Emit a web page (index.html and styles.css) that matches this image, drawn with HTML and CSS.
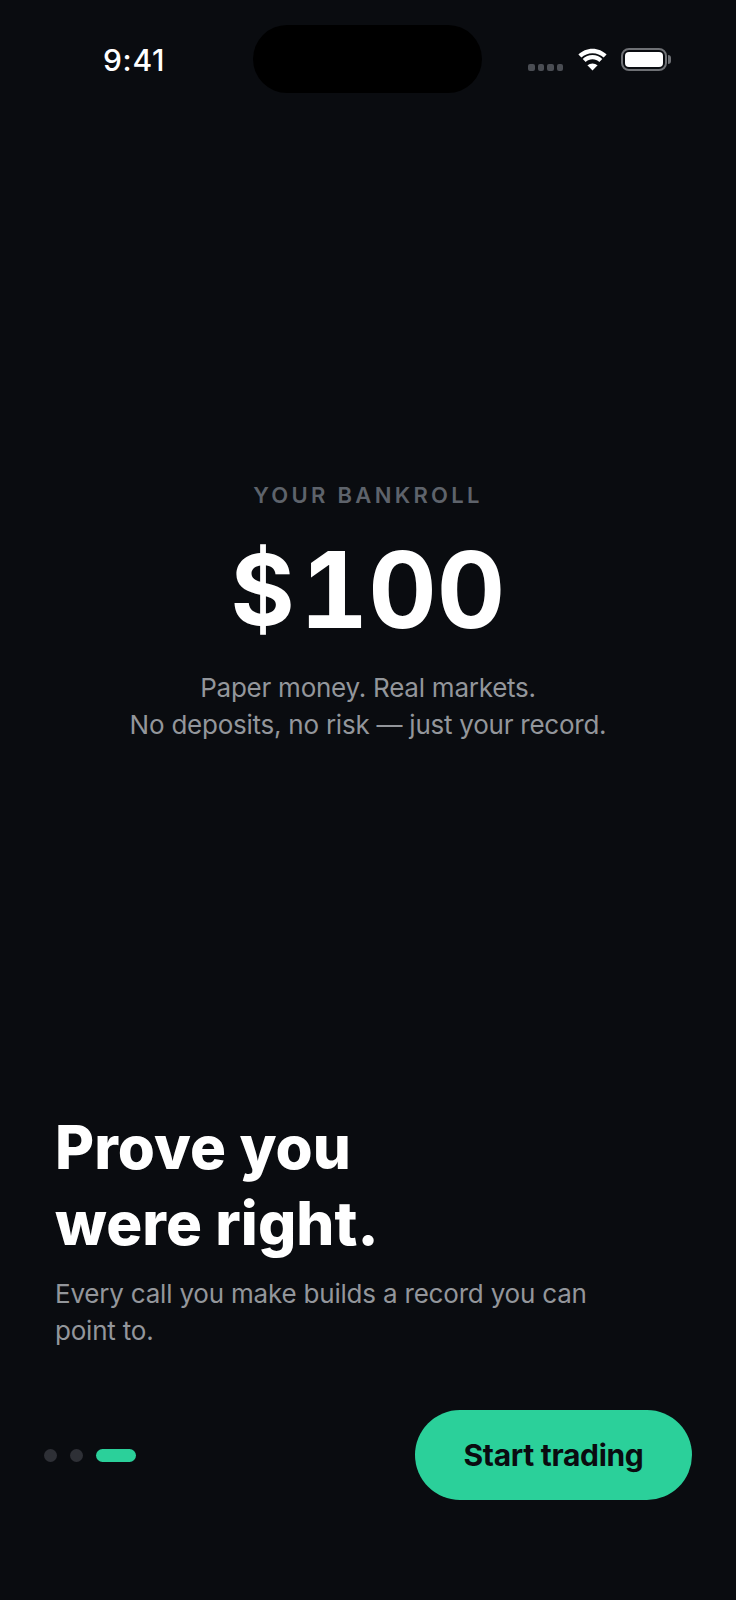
FILE: index.html
```html
<!DOCTYPE html>
<html lang="en">
<head>
  <meta charset="UTF-8">
  <meta name="viewport" content="width=device-width, initial-scale=1.0">
  <title>Bankroll</title>
  <link rel="stylesheet" href="styles.css">
</head>
<body>
  <div class="screen">
    <div class="status-bar">
      <span class="time">9:41</span>
      <div class="island"></div>
      <div class="status-icons">
        <div class="signal"><i></i><i></i><i></i><i></i></div>
        <svg class="wifi" width="31" height="23" viewBox="0 0 31 23">
          <path d="M15.5 5.2c4.3 0 8.2 1.7 11.1 4.4l3-3C26 3 21 .7 15.5.7S5 3 1.4 6.6l3 3c2.9-2.7 6.8-4.4 11.1-4.4z" fill="#fff"/>
          <path d="M15.5 11.2c2.6 0 5 1 6.8 2.7l3-3c-2.6-2.4-6-3.9-9.8-3.9s-7.2 1.5-9.8 3.9l3 3c1.8-1.7 4.2-2.7 6.8-2.7z" fill="#fff"/>
          <path d="M15.5 22.6l5.1-5.3c-1.4-1.1-3.2-1.9-5.1-1.9s-3.7.8-5.1 1.9z" fill="#fff"/>
        </svg>
        <div class="battery"><div class="battery-fill"></div></div>
      </div>
    </div>

    <div class="hero">
      <div class="hero-label">YOUR BANKROLL</div>
      <div class="hero-amount"><span class="currency">$</span>100</div>
      <p class="hero-text">Paper money. Real markets.<br>No deposits, no risk — just your record.</p>
    </div>

    <div class="copy">
      <h1>Prove you<br>were right.</h1>
      <p>Every call you make builds a record you can point to.</p>
    </div>

    <div class="footer">
      <div class="dots">
        <span class="dot"></span>
        <span class="dot"></span>
        <span class="dot active"></span>
      </div>
      <button class="btn-start">Start trading</button>
    </div>
  </div>
</body>
</html>
```

FILE: styles.css
```css
* {
  box-sizing: border-box;
}

body {
  margin: 0;
  background-color: #0a0c10;
  font-family: "Inter", "Liberation Sans", sans-serif;
}

.screen {
  width: 736px;
  height: 1600px;
  overflow: hidden;
  display: flex;
  flex-direction: column;
}

/* status bar */
.status-bar {
  height: 93px;
  padding: 25px 65px 0 103px;
  display: flex;
  align-items: flex-start;
}

.time {
  width: 150px;
  margin-top: 17px;
  color: #fff;
  font-size: 30px;
  font-weight: 500;
  line-height: 36px;
  letter-spacing: 0.7px;
}

.island {
  width: 229px;
  height: 68px;
  border-radius: 34px;
  background-color: #000;
}

.status-icons {
  margin-left: 46px;
  margin-top: 23px;
  display: flex;
  align-items: flex-start;
}

.signal {
  display: flex;
  gap: 3px;
  margin-top: 16px;
  margin-right: 14px;
}

.signal i {
  width: 6.5px;
  height: 7px;
  border-radius: 2px;
  background-color: #4a4d53;
}

.wifi {
  display: block;
  margin-right: 13px;
}

.battery {
  position: relative;
  width: 46px;
  height: 23px;
  padding: 2px;
  border: 2px solid #6f7175;
  border-radius: 8px;
}

.battery::after {
  content: "";
  position: absolute;
  top: 5px;
  right: -6px;
  width: 3px;
  height: 9px;
  border-radius: 0 3px 3px 0;
  background-color: #6f7175;
}

.battery-fill {
  width: 100%;
  height: 100%;
  border-radius: 4px;
  background-color: #fff;
}

/* bankroll */
.hero {
  margin-top: 388px;
  text-align: center;
}

.hero-label {
  color: #5e636b;
  font-size: 22px;
  font-weight: 600;
  line-height: 28px;
  letter-spacing: 3.3px;
}

.hero-amount {
  margin-top: 23px;
  color: #fff;
  font-size: 106px;
  font-weight: 700;
  line-height: 116px;
  font-variant-numeric: tabular-nums;
}

.currency {
  margin-right: 5px;
  font-size: 98px;
  vertical-align: 3px;
  line-height: 1;
}

.hero-text {
  margin: 21px 0 0;
  color: #93969b;
  font-size: 26px;
  line-height: 37px;
  letter-spacing: -0.24px;
}

/* headline */
.copy {
  margin-top: 366px;
  padding: 0 55px;
}

.copy h1 {
  margin: 0;
  color: #fff;
  font-size: 60px;
  font-weight: 800;
  line-height: 76px;
  letter-spacing: 0.1px;
}

.copy p {
  margin: 14px 0 0;
  width: 560px;
  color: #93969b;
  font-size: 26px;
  line-height: 37px;
  letter-spacing: -0.2px;
}

/* dots + button */
.footer {
  margin-top: 61px;
  padding: 0 44px;
  display: flex;
  align-items: center;
  justify-content: space-between;
}

.dots {
  display: flex;
  gap: 13px;
}

.dot {
  width: 13px;
  height: 13px;
  border-radius: 7px;
  background-color: #2e3036;
}

.dot.active {
  width: 40px;
  background-color: #2bd09a;
}

.btn-start {
  width: 277px;
  height: 90px;
  border: none;
  border-radius: 45px;
  background-color: #2bd09a;
  color: #0a0c10;
  font-family: inherit;
  font-size: 30px;
  font-weight: 700;
  letter-spacing: -0.3px;
}
```
